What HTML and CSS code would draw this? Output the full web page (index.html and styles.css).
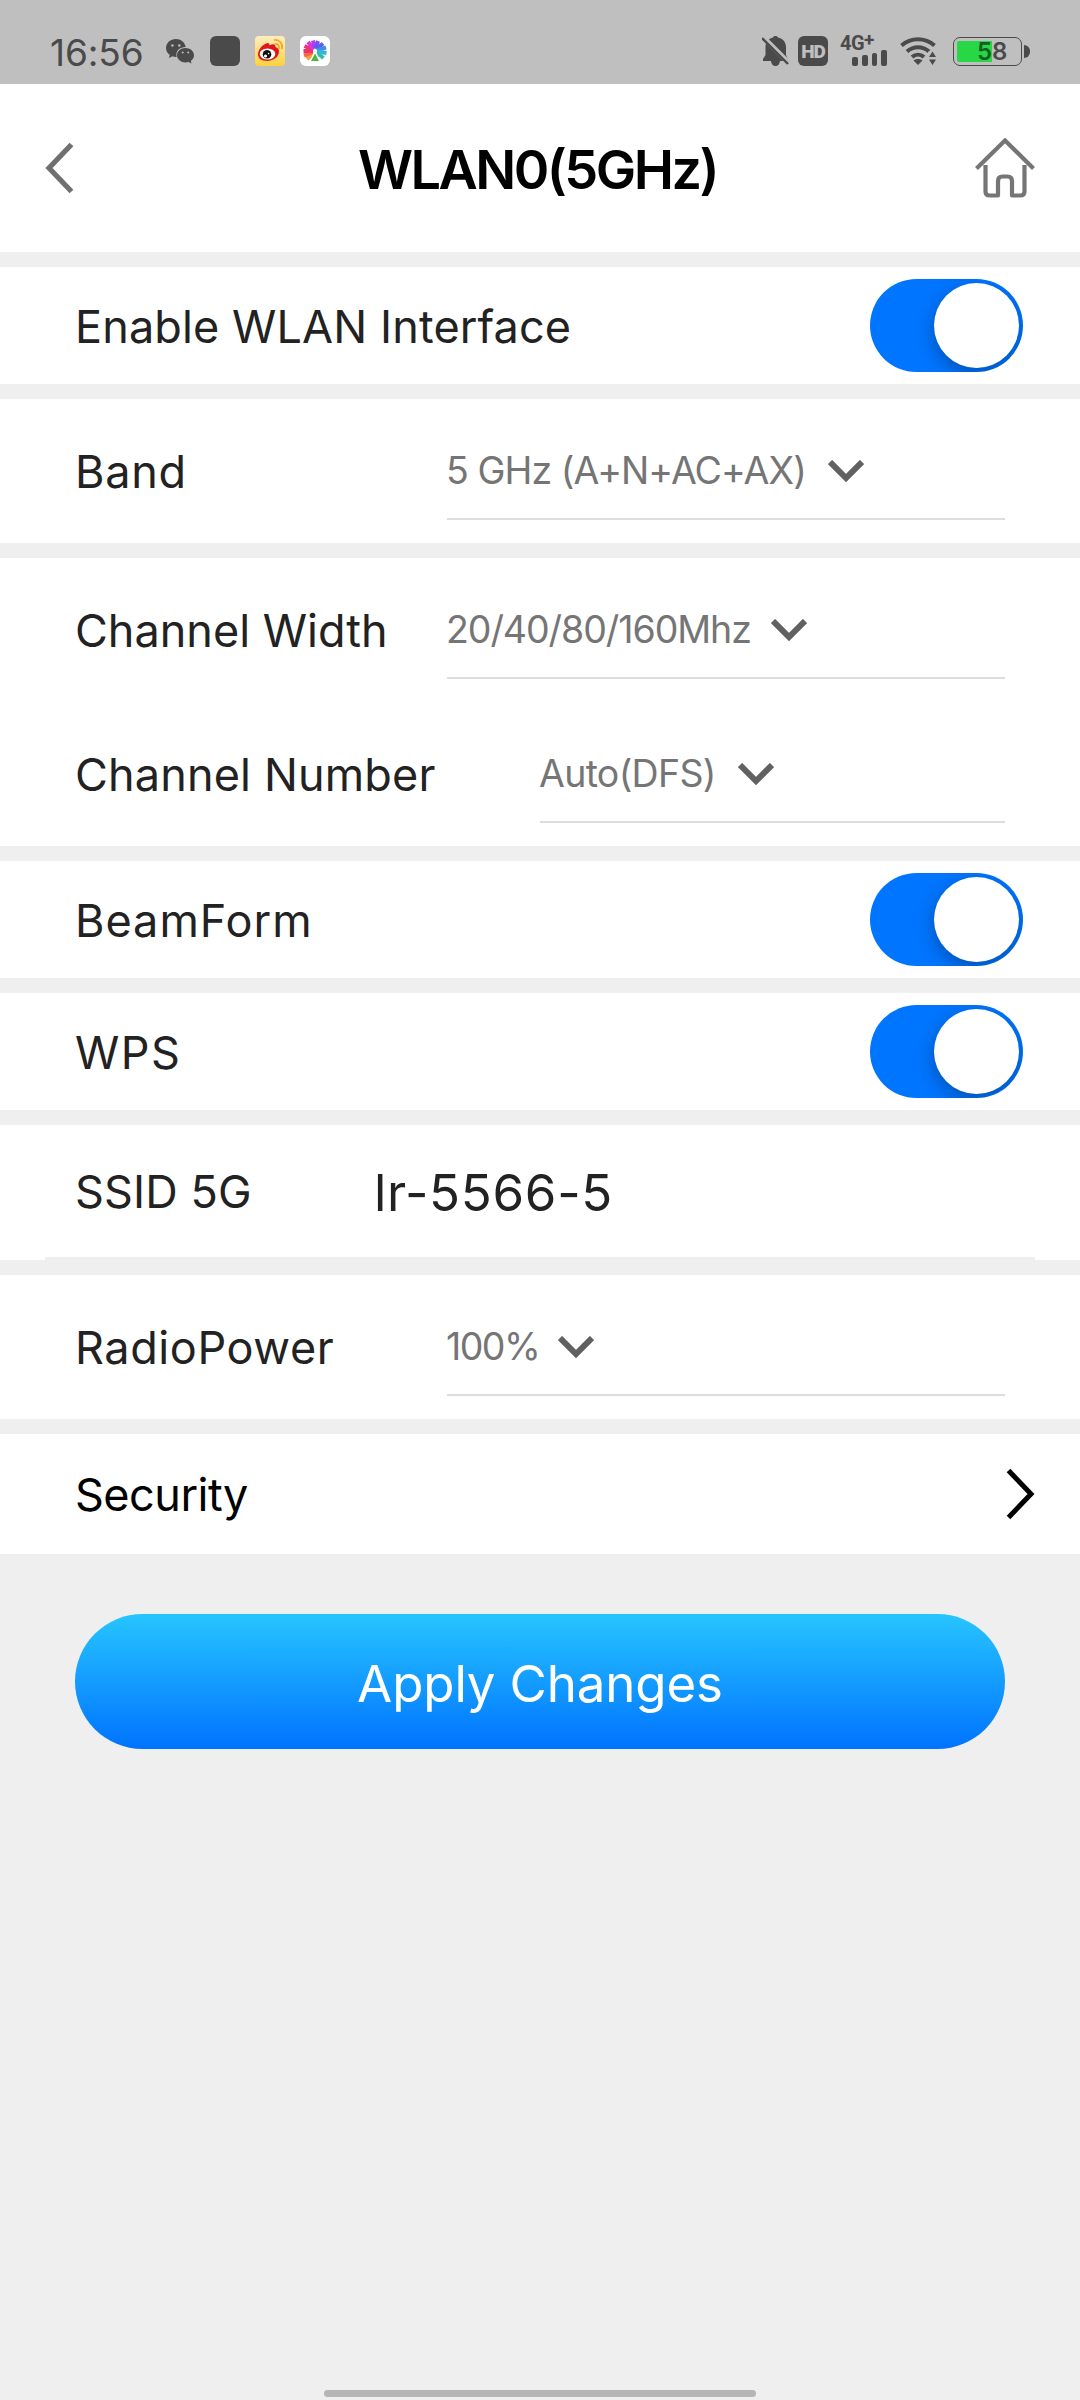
FILE: index.html
```html
<!doctype html>
<html lang="en">
<head>
    <meta charset="UTF-8">
    <title>WLAN0(5GHz)</title>
    <link rel="stylesheet" href="styles.css">
</head>
<body>
    <!-- status bar -->
    <div class="status-bar">
        <div class="status-left">
            <span class="clock">16:56</span>
            <svg class="icon-chat" width="28" height="25" viewBox="0 0 28 25">
                <path fill="#4a4a4a" d="M10 0C4.400 0 0 3.900 0 9c0 3 1.500 5.300 3.800 7l-.9 3 3.600-1.700c1.100.4 2.300.6 3.500.6h.6C9.300 11.700 13.800 8 19.700 8C18.800 3.200 14.800 0 10 0z"/>
                <path fill="#4a4a4a" d="M19.500 9c-4.700 0-8.500 3.200-8.500 7.200s3.800 7.200 8.500 7.200c1.100 0 2.200-.2 3.100-.5l2.900 1.600-.7-2.600c2-1.300 3.200-3.300 3.200-5.700C28 12.200 24.200 9 19.500 9z"/>
                <g fill="#bfbfbf">
                    <circle cx="6.400" cy="6.500" r="1.200"/>
                    <circle cx="13.300" cy="6.500" r="1.200"/>
                    <circle cx="16.700" cy="13.500" r="1"/>
                    <circle cx="22.200" cy="13.500" r="1"/>
                </g>
            </svg>
            <span class="icon-square"></span>
            <svg class="icon-weibo" width="30" height="30" viewBox="0 0 30 30">
                <defs>
                    <linearGradient id="weibo" x1="0" y1="0" x2="0" y2="1">
                        <stop offset="0" stop-color="#feedc0"/>
                        <stop offset="1" stop-color="#fdd13c"/>
                    </linearGradient>
                </defs>
                <rect width="30" height="30" rx="4" fill="url(#weibo)"/>
                <path fill="#e0161a" d="M12 7.200c1.800-.5 2.700.6 2.500 2.300 3-1.900 6.200-1.600 6 1.600 2 .8 3.800 2 3.500 4.700C23.600 21.500 18 25 12 25 6.500 25 3 22.200 3 18.500 3 13.500 8 8 12 7.200z"/>
                <ellipse cx="12.500" cy="18" rx="7.800" ry="5.500" fill="#fff"/>
                <circle cx="12" cy="18.300" r="4.300" fill="#111"/>
                <circle cx="10.500" cy="20" r="1.600" fill="#fff"/>
                <circle cx="13.600" cy="17.600" r=".8" fill="#fff"/>
                <path d="M19.500 4C24.500 3.500 28 7.500 27 12.500M20 8c2.700-.3 4.500 1.600 4 4.300" fill="none" stroke="#f5a623" stroke-width="1.700" stroke-linecap="round"/>
            </svg>
            <svg class="icon-fan" width="30" height="30" viewBox="0 0 30 30">
                <rect width="30" height="30" rx="6" fill="#fff"/>
                <g stroke-width="4">
                    <path stroke="#f5a033" d="M13.500 17L7 23"/>
                    <path stroke="#f26a4b" d="M13 16.200L4 19.500"/>
                    <path stroke="#f0365f" d="M13 15L3.500 15"/>
                    <path stroke="#ee2f86" d="M13.200 14L4.500 10"/>
                    <path stroke="#d936d0" d="M13.800 13L8 6"/>
                    <path stroke="#b13df0" d="M14.800 12.500L13 4.500"/>
                    <path stroke="#7d4bf2" d="M15.500 12.500L18 5"/>
                    <path stroke="#5463ee" d="M16.300 13.200L23 7.500"/>
                    <path stroke="#3f8fe8" d="M17 14.300L26 11.500"/>
                    <path stroke="#35b3dd" d="M17 15.500L26.500 17"/>
                    <path stroke="#2fc0a8" d="M16.500 16.500L23.500 22"/>
                </g>
                <path fill="#fff" d="M14 15.500L9.800 25.500H20.200L16 15.500z"/>
                <path fill="#4bb749" d="M15 17.500L11 25H19z"/>
                <circle cx="15" cy="15" r="1.800" fill="#fff"/>
            </svg>
        </div>
        <div class="status-right">
            <svg class="icon-bell" width="27" height="30" viewBox="0 0 27 30">
                <path fill="#4a4a4a" d="M13.500 0c1.300 0 2 .6 2.500 1.400C21 2.500 24 6 24 11v8l1.500 3.500V25H18c-.3 3-2 5-4.500 5S9.300 28 9 25H1v-2l2.500-4v-8c0-5 3-8.500 7.500-9.600C11.500.6 12.200 0 13.500 0z"/>
                <path stroke="#bfbfbf" stroke-width="5" d="M1 1L28 28"/>
                <path stroke="#4a4a4a" stroke-width="2.400" d="M0 2L26 28"/>
            </svg>
            <span class="icon-hd">HD</span>
            <div class="signal">
                <span class="net">4G<sup>+</sup></span>
                <div class="bars"><i></i><i></i><i></i><i></i></div>
            </div>
            <svg class="icon-wifi" width="37" height="29" viewBox="0 0 37 29">
                <g fill="none" stroke="#4a4a4a" stroke-width="4">
                    <path d="M1.500 8.500C11 .2 25 .2 34.500 8.500"/>
                    <path d="M7 14.500c6.500-5.600 15.500-5.600 22 0"/>
                    <path d="M12 20c3.500-3 8.500-3 12 0"/>
                </g>
                <path fill="#4a4a4a" d="M18 28l-4.500-4.500c2.500-2 6.500-2 9 0z"/>
                <path fill="#bfbfbf" d="M28 14.500h8V29h-8z"/>
                <path fill="#4a4a4a" d="M32.500 14.500l3.500 5.500h-7zM32.500 28l3.500-5.500h-7z"/>
            </svg>
            <div class="battery">
                <span class="level"></span>
                <span class="percent"><b>5</b>8</span>
            </div>
            <span class="nub"></span>
        </div>
    </div>

    <!-- header -->
    <div class="header">
        <svg class="back" width="30" height="52" viewBox="0 0 30 52">
            <path d="M26.500 2.500L4 26L26.500 49.500" fill="none" stroke="#707070" stroke-width="5.200"/>
        </svg>
        <h1>WLAN0(5GHz)</h1>
        <svg class="home" width="60" height="60" viewBox="0 0 60 60">
            <g fill="none" stroke="#757575" stroke-width="4.200" stroke-linejoin="round">
                <path d="M1.500 30.500L30 2.500L58.500 30.500" stroke-linejoin="miter"/>
                <path d="M10.500 27V53.500Q10.500 57.500 14.500 57.500H23V43Q23 38.500 27.500 38.500H32.500Q37 38.500 37 43V57.500H45.500Q49.500 57.500 49.500 53.500V27"/>
            </g>
        </svg>
    </div>

    <!-- settings -->
    <div class="settings">
        <div class="card row switch-row">
            <span class="label enable">Enable WLAN Interface</span>
            <span class="switch"><i></i></span>
        </div>

        <div class="card">
            <div class="row select-row">
                <span class="label band">Band</span>
                <div class="select">
                    <span class="band-value">5 GHz (A+N+AC+AX)</span>
                    <svg class="arrow" width="36" height="22" viewBox="0 0 36 22"><path d="M2 2L18 18L34 2" fill="none" stroke="#616161" stroke-width="6"/></svg>
                </div>
            </div>
        </div>

        <div class="card">
            <div class="row select-row">
                <span class="label width">Channel Width</span>
                <div class="select">
                    <span class="width-value">20/40/80/160Mhz</span>
                    <svg class="arrow" width="36" height="22" viewBox="0 0 36 22"><path d="M2 2L18 18L34 2" fill="none" stroke="#616161" stroke-width="6"/></svg>
                </div>
            </div>
            <div class="row select-row wide">
                <span class="label number">Channel Number</span>
                <div class="select">
                    <span class="number-value">Auto(DFS)</span>
                    <svg class="arrow" width="36" height="22" viewBox="0 0 36 22"><path d="M2 2L18 18L34 2" fill="none" stroke="#616161" stroke-width="6"/></svg>
                </div>
            </div>
        </div>

        <div class="card row switch-row">
            <span class="label beam">BeamForm</span>
            <span class="switch"><i></i></span>
        </div>

        <div class="card row switch-row">
            <span class="label wps">WPS</span>
            <span class="switch"><i></i></span>
        </div>

        <div class="card input-card">
            <div class="row input-row">
                <span class="label ssid">SSID 5G</span>
                <span class="ssid-value">lr-5566-5</span>
            </div>
        </div>

        <div class="card">
            <div class="row select-row">
                <span class="label radio">RadioPower</span>
                <div class="select">
                    <span class="radio-value">100%</span>
                    <svg class="arrow" width="36" height="22" viewBox="0 0 36 22"><path d="M2 2L18 18L34 2" fill="none" stroke="#616161" stroke-width="6"/></svg>
                </div>
            </div>
        </div>

        <div class="card row link-row">
            <span class="label security">Security</span>
            <svg width="30" height="52" viewBox="0 0 30 52">
                <path d="M3.500 2.500L26 26L3.500 49.500" fill="none" stroke="#000" stroke-width="5"/>
            </svg>
        </div>
    </div>

    <button type="button" class="apply">Apply Changes</button>

    <div class="home-bar"></div>
</body>
</html>
```
FILE: styles.css
```css
* {
    box-sizing: border-box;
}
body {
    margin: 0;
    width: 1080px;
    height: 2400px;
    display: flex;
    flex-direction: column;
    background: #efefef;
    font-family: "Inter", sans-serif;
    font-weight: 400;
    color: #222;
}
svg {
    display: block;
    flex: none;
}

/* status bar */
.status-bar {
    height: 84px;
    padding: 18px 50px 0 50px;
    display: flex;
    justify-content: space-between;
    align-items: center;
    background: #bfbfbf;
    color: #4a4a4a;
}
.status-left,
.status-right {
    display: flex;
    align-items: center;
}
.clock {
    width: 116px;
    font-size: 37px;
    line-height: 44px;
    letter-spacing: -0.1px;
    padding-top: 4px;
}
.icon-square {
    width: 30px;
    height: 30px;
    margin: 0 15px 0 16px;
    border-radius: 6px;
    background: #4a4a4a;
}
.icon-weibo {
    margin-right: 15px;
}
.icon-hd {
    width: 30px;
    height: 30px;
    margin-left: 9px;
    border-radius: 6px;
    background: #4a4a4a;
    color: #bfbfbf;
    font: 900 19px/31px "Roboto", sans-serif;
    letter-spacing: -1px;
    text-align: center;
}
.signal {
    width: 47px;
    height: 30px;
    margin: 0 13px 0 12px;
}
.net {
    display: flex;
    height: 16px;
    font: 700 20px/15px "Roboto", sans-serif;
    letter-spacing: -0.5px;
}
.net sup {
    font-size: 19px;
    line-height: 8px;
}
.bars {
    display: flex;
    align-items: flex-end;
    gap: 4px;
    height: 16px;
    margin: -2px 0 0 12px;
}
.bars i {
    width: 6px;
    height: 9px;
    border-radius: 2px;
    background: #4a4a4a;
}
.bars i:nth-child(2) {
    height: 11px;
}
.bars i:nth-child(3) {
    height: 13px;
}
.bars i:nth-child(4) {
    height: 16px;
}
.battery {
    position: relative;
    width: 69px;
    height: 29px;
    margin-left: 16px;
    padding: 3px;
    border: 1px solid #4a4a4a;
    border-radius: 7px;
}
.level {
    display: block;
    width: 35px;
    height: 21px;
    border-radius: 2px 0 0 2px;
    background: #28d745;
}
.percent {
    position: absolute;
    left: 23px;
    top: 0;
    font-size: 24px;
    line-height: 27px;
    font-weight: 600;
}
.percent b {
    font-weight: 600;
    color: #14601f;
}
.nub {
    width: 6px;
    height: 13px;
    margin-left: 2px;
    border-radius: 0 6px 6px 0;
    background: #4a4a4a;
}

/* header */
.header {
    height: 168px;
    padding: 0 45px;
    display: flex;
    align-items: center;
    justify-content: space-between;
    background: #fff;
}
.header .home {
    margin-left: -30px;
}
.header h1 {
    margin: 4px 0 0 -5px;
    font-size: 54px;
    line-height: 64px;
    font-weight: 600;
    letter-spacing: -2.550px;
    color: #000;
}

/* settings */
.settings {
    padding-top: 15px;
    display: flex;
    flex-direction: column;
    gap: 15px;
}
.card {
    background: #fff;
}
.row {
    display: flex;
    align-items: center;
}
.label {
    padding: 2px 0 0 75px;
    font-size: 45px;
    line-height: 56px;
    white-space: nowrap;
}
.switch-row {
    height: 117px;
    justify-content: space-between;
    padding-right: 57px;
}
.switch {
    width: 153px;
    height: 93px;
    padding: 4px 4.500px;
    display: flex;
    justify-content: flex-end;
    border-radius: 47px;
    background: #0075ff;
    overflow: hidden;
}
.switch i {
    width: 85px;
    height: 85px;
    border-radius: 50%;
    background: #fff;
    box-shadow: 0 6px 18px rgba(0, 0, 0, 0.300);
}
.select-row {
    height: 144px;
    padding-right: 75px;
}
.select-row .label {
    width: 447px;
}
.select-row.wide .label {
    width: 540px;
}
.select {
    flex: 1;
    height: 97px;
    display: flex;
    align-items: center;
    border-bottom: 2px solid #ddd;
    font-size: 37.500px;
    color: #757575;
    white-space: nowrap;
}
.select span {
    margin-left: -1px;
}
.arrow {
    margin: 2px 0 0 20px;
}
.input-card {
    height: 135px;
    padding: 0 45px;
}
.input-row {
    height: 135px;
    border-bottom: 3px solid #eee;
}
.input-row .label {
    width: 329px;
    padding-left: 30px;
}
.ssid-value {
    padding-top: 3px;
    font-size: 51px;
    line-height: 60px;
    letter-spacing: 0.700px;
}
.link-row {
    height: 120px;
    padding-right: 45px;
    justify-content: space-between;
    color: #000;
}

/* per label tracking */
.enable { letter-spacing: 0.120px; }
.band { letter-spacing: 0.730px; }
.width { letter-spacing: 0; }
.number { letter-spacing: 0.150px; }
.beam { letter-spacing: 1px; }
.wps { letter-spacing: 1.500px; }
.ssid { letter-spacing: 0.100px; }
.radio { letter-spacing: 0.600px; }
.security { letter-spacing: -0.510px; }
.band-value { letter-spacing: -0.950px; }
.width-value { letter-spacing: -1.060px; }
.number-value { letter-spacing: -0.700px; }
.radio-value { letter-spacing: -1.520px; }
.band-value + .arrow { margin-left: 22px; }
.number-value + .arrow { margin-left: 22px; }
.radio-value + .arrow { margin-left: 19px; }

.apply {
    height: 135px;
    margin: 60px 75px 0;
    padding: 4px 0 0;
    border: none;
    border-radius: 68px;
    background: linear-gradient(#27c5ff, #0073ff);
    color: #fff;
    font-family: inherit;
    font-size: 51px;
    letter-spacing: -0.120px;
    cursor: pointer;
}
.home-bar {
    width: 432px;
    height: 7px;
    margin: auto auto 3px;
    border-radius: 4px;
    background: #b5b5b5;
}
```
